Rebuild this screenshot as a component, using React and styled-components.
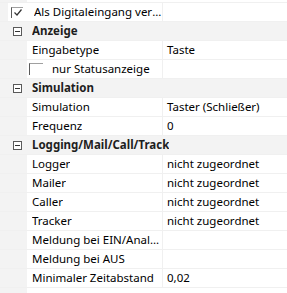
import React from "react";
import styled, { createGlobalStyle } from "styled-components";

const Global = createGlobalStyle`
  html, body { margin: 0; padding: 0; background: #ffffff; }
  body { font-family: "Noto Sans", "Open Sans", sans-serif; font-size: 11.5px; color: #000; }
`;

const Grid = styled.div`
  width: 287px;
  height: 293px;
  padding-top: 2px;
  box-sizing: border-box;
  background: linear-gradient(to right, #f3f3f3 27px, #ffffff 27px);
  display: flex;
  flex-direction: column;
`;

const Row = styled.div`
  display: grid;
  grid-template-columns: ${(p) => p.$gutter}px ${(p) => 163 - p.$gutter}px 1fr;
  height: 19px;
  box-sizing: border-box;
  border-top: 1px solid #f0f0f0;
  background: ${(p) => (p.$header ? "#f3f3f3" : "transparent")};
  &:last-child { border-bottom: 1px solid #f0f0f0; height: 20px; }
`;

const Gutter = styled.div`
  background: #f3f3f3;
  display: flex;
  align-items: center;
  padding-left: ${(p) => (p.$empty ? 0 : 13)}px;
`;

const NameCell = styled.div`
  background: ${(p) => (p.$header ? "#f3f3f3" : "#ffffff")};
  border-right: ${(p) => (p.$header ? "none" : "1px solid #f0f0f0")};
  display: flex;
  align-items: center;
  padding-left: ${(p) => p.$indent}px;
  white-space: nowrap;
  overflow: hidden;
  line-height: 18px;
  min-width: 0;
  font-weight: ${(p) => (p.$header ? 700 : 400)};
  color: ${(p) => (p.$header ? "#1e1e1e" : "#000")};
  grid-column: ${(p) => (p.$header ? "2 / 4" : "auto")};
`;

const NameText = styled.span`
  overflow: hidden;
  text-overflow: ${(p) => (p.$ellipsis ? "ellipsis" : "clip")};
  min-width: 0;
`;

const ValueCell = styled.div`
  background: #ffffff;
  display: flex;
  align-items: center;
  padding-left: 4px;
  white-space: nowrap;
  overflow: hidden;
  line-height: 18px;
`;

const Box = styled.span`
  flex: none;
  width: 9px;
  height: 9px;
  box-sizing: border-box;
  border: 1px solid #5a5a5a;
  display: flex;
  align-items: center;
  justify-content: center;
  background: #fff;
`;

const Check = styled.span`
  flex: none;
  width: ${(p) => p.$w}px;
  height: ${(p) => p.$h}px;
  box-sizing: border-box;
  border-left: 1px solid #5a5a5a;
  border-top: 1px solid #a0a0a0;
  margin-right: ${(p) => p.$gap}px;
  display: flex;
  align-items: center;
  justify-content: center;
`;

const Minus = () => (
  <Box>
    <svg width="7" height="7" viewBox="0 0 7 7">
      <rect x="1" y="3" width="5" height="1" fill="#333" />
    </svg>
  </Box>
);

const rows = [
  { type: "check", name: "Als Digitaleingang verwenden", checked: true },
  { type: "header", name: "Anzeige" },
  { name: "Eingabetype", value: "Taste" },
  { type: "subcheck", name: "nur Statusanzeige" },
  { type: "header", name: "Simulation" },
  { name: "Simulation", value: "Taster (Schließer)" },
  { name: "Frequenz", value: "0" },
  { type: "header", name: "Logging/Mail/Call/Track" },
  { name: "Logger", value: "nicht zugeordnet" },
  { name: "Mailer", value: "nicht zugeordnet" },
  { name: "Caller", value: "nicht zugeordnet" },
  { name: "Tracker", value: "nicht zugeordnet" },
  { name: "Meldung bei EIN/Analogwert", value: "", ellipsis: true },
  { name: "Meldung bei AUS", value: "" },
  { name: "Minimaler Zeitabstand", value: "0,02" },
];

export default function App() {
  return (
    <>
      <Global />
      <Grid>
        {rows.map((r, i) => {
          if (r.type === "header") {
            return (
              <Row key={i} $gutter={27} $header>
                <Gutter>
                  <Minus />
                </Gutter>
                <NameCell $header $indent={5}>
                  <NameText>{r.name}</NameText>
                </NameCell>
              </Row>
            );
          }
          if (r.type === "check") {
            return (
              <Row key={i} $gutter={8}>
                <Gutter $empty />
                <NameCell $indent={3}>
                  <Check $gap={11} $w={12} $h={11}>
                    <svg width="10" height="9" viewBox="0 0 10 9">
                      <path d="M1.5 4.5 L4 7 L8.5 1.5" stroke="#333" strokeWidth="1.2" fill="none" />
                    </svg>
                  </Check>
                  <NameText $ellipsis>{r.name}</NameText>
                </NameCell>
                <ValueCell />
              </Row>
            );
          }
          if (r.type === "subcheck") {
            return (
              <Row key={i} $gutter={27}>
                <Gutter />
                <NameCell $indent={2}>
                  <Check $gap={9} $w={14} $h={12} />
                  <NameText>{r.name}</NameText>
                </NameCell>
                <ValueCell />
              </Row>
            );
          }
          return (
            <Row key={i} $gutter={27}>
              <Gutter />
              <NameCell $indent={5}>
                <NameText $ellipsis={r.ellipsis}>{r.name}</NameText>
              </NameCell>
              <ValueCell>{r.value}</ValueCell>
            </Row>
          );
        })}
      </Grid>
    </>
  );
}
